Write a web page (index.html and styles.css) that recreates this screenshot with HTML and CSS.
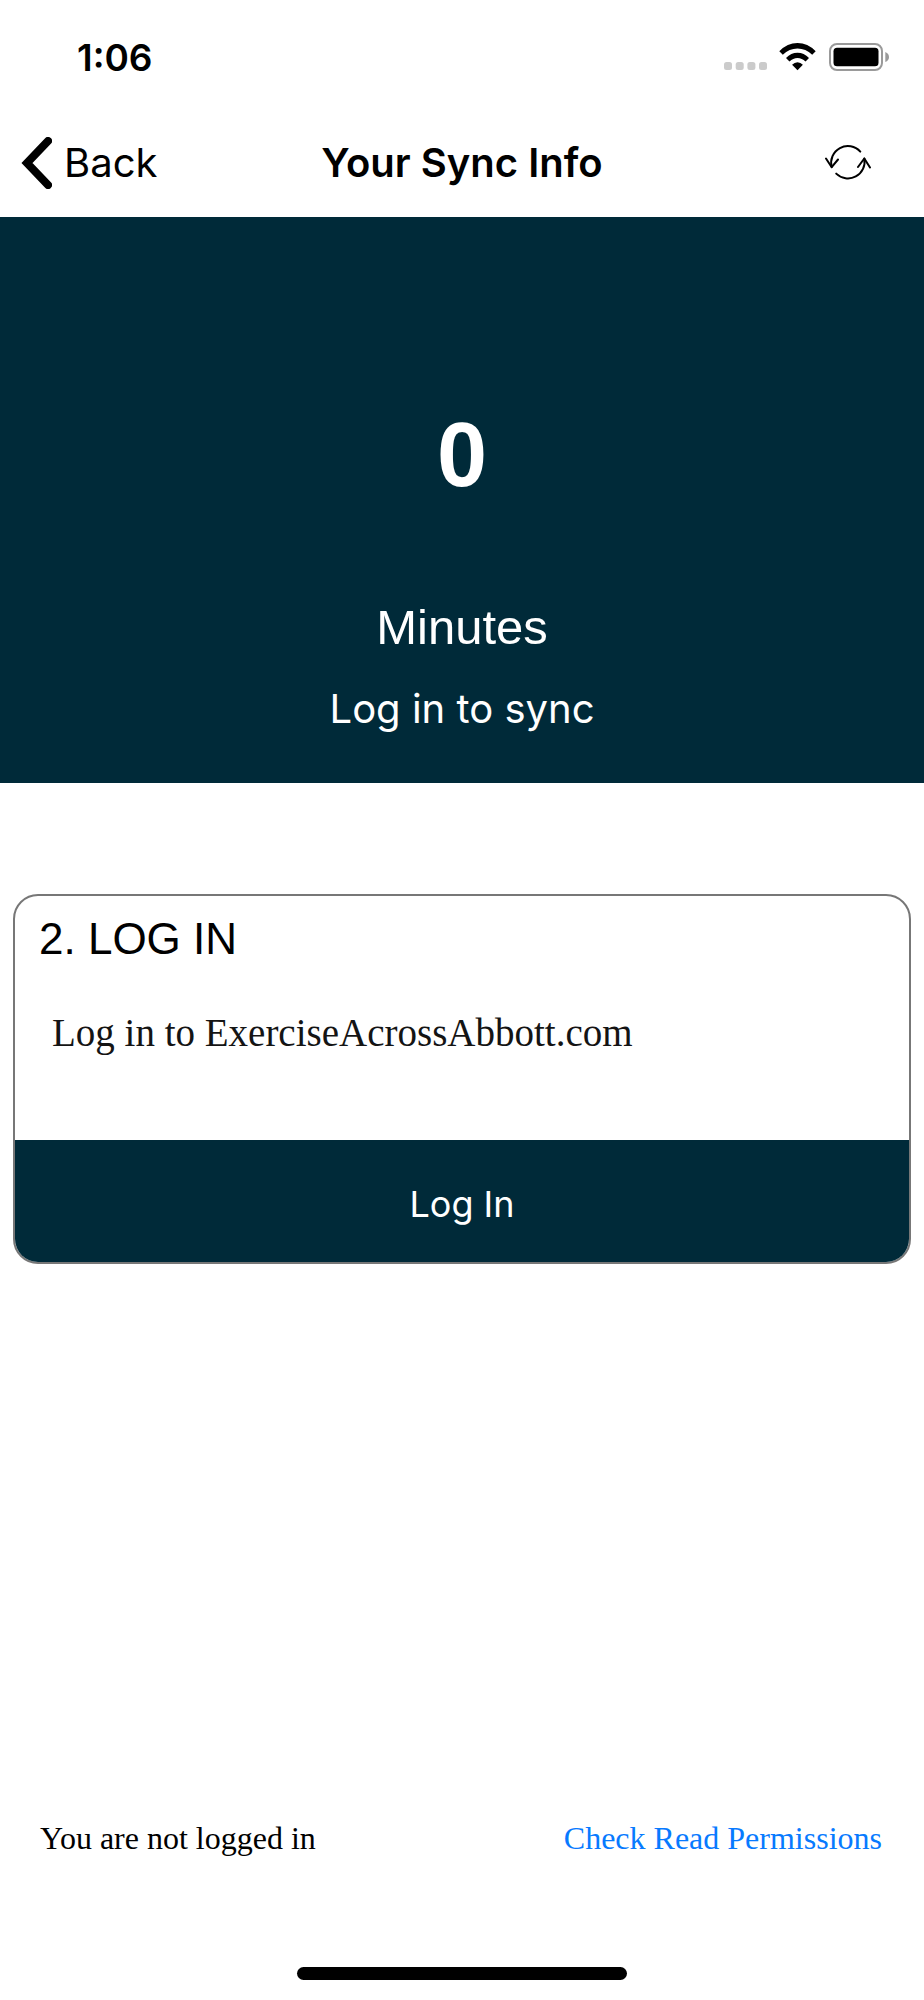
FILE: index.html
```html
<!DOCTYPE html>
<html lang="en">
<head>
    <meta charset="UTF-8">
    <meta name="viewport" content="width=device-width, initial-scale=1.0">
    <title>Your Sync Info</title>
    <link rel="stylesheet" href="styles.css">
</head>
<body>
    <div class="status-bar">
        <span class="time">1:06</span>
        <div class="status-icons">
            <svg class="signal" width="43" height="28" viewBox="0 0 43 28" fill="#cbcbcb">
                <rect x="0" y="19" width="8" height="8" rx="2.5"/>
                <rect x="11.7" y="19" width="8" height="8" rx="2.5"/>
                <rect x="23.4" y="19" width="8" height="8" rx="2.5"/>
                <rect x="35" y="19" width="8" height="8" rx="2.5"/>
            </svg>
            <svg class="wifi" width="38" height="28" viewBox="0 0 38 28">
                <path d="M0.3 8.2 Q8.3 0 18.5 0 Q28.7 0 36.7 8.2 L33.2 11.8 Q26.7 5.4 18.5 5.4 Q10.3 5.4 3.8 11.8 Z"/>
                <path d="M7 14.9 Q12 9.7 18.5 9.7 Q25 9.7 30 14.9 L26.5 18.5 Q23 15 18.5 15 Q14 15 10.5 18.5 Z"/>
                <path d="M13.1 21.7 Q15.4 19.2 18.5 19.2 Q21.6 19.2 23.9 21.7 L18.5 27.2 Z"/>
            </svg>
            <svg class="battery" width="62" height="28" viewBox="0 0 62 28">
                <rect x="1" y="1" width="52" height="26" rx="7" fill="none" stroke="#9a9a9a" stroke-width="2"/>
                <rect x="4.5" y="4.8" width="45" height="18.4" rx="3.5"/>
                <path d="M56.3 9 Q60 10.5 60 14 Q60 17.5 56.3 19 Z" fill="#9a9a9a"/>
            </svg>
        </div>
    </div>

    <header class="nav">
        <button class="back" type="button">
            <svg width="32" height="52" viewBox="0 0 32 52">
                <path d="M28 4 L7 26 L28 48" fill="none" stroke="#000" stroke-width="8" stroke-linecap="round" stroke-linejoin="miter"/>
            </svg>
            Back
        </button>
        <h1>Your Sync Info</h1>
        <button class="refresh" type="button" aria-label="Refresh">
            <svg width="46" height="38" viewBox="0 0 46 38" fill="none" stroke="#000" stroke-width="2" stroke-linecap="round" stroke-linejoin="round">
                <path d="M35.3 7.6 A16.7 16.7 0 0 0 6.7 23"/>
                <path d="M1 14.5 L6.7 23.2 L13 15.5"/>
                <path d="M11.2 29.6 A16.7 16.7 0 0 0 39.3 14.5"/>
                <path d="M33 23 L39.3 14.5 L45 23.5"/>
            </svg>
        </button>
    </header>

    <section class="summary">
        <p class="count">0</p>
        <p class="unit">Minutes</p>
        <p class="hint">Log in to sync</p>
    </section>

    <section class="card">
        <h2>2. LOG IN</h2>
        <p>Log in to ExerciseAcrossAbbott.com</p>
        <button class="login" type="button">Log In</button>
    </section>

    <footer class="footer">
        <span>You are not logged in</span>
        <a href="#">Check Read Permissions</a>
    </footer>
    <div class="home-bar"></div>
</body>
</html>
```

FILE: styles.css
```css
* {
    box-sizing: border-box;
}
body {
    display: flex;
    flex-direction: column;
    min-height: 100vh;
    margin: 0;
    background-color: #ffffff;
    color: #000000;
    font-family: Inter, "Liberation Sans", sans-serif;
}
h1, h2, p {
    margin: 0;
    font-weight: 400;
}
button {
    padding: 0;
    border: none;
    background: none;
    color: inherit;
    font-family: inherit;
    cursor: pointer;
}
svg {
    display: block;
}

/* Status bar */
.status-bar {
    display: flex;
    justify-content: space-between;
    align-items: center;
    height: 114px;
    padding: 0 33px 0 77px;
}
.time {
    font-size: 37px;
    font-weight: 600;
}
.status-icons {
    display: flex;
    gap: 12px;
}

/* Navigation */
.nav {
    display: grid;
    grid-template-columns: 1fr auto 1fr;
    align-items: center;
    height: 103px;
    padding: 0 20px 6px;
}
.back {
    display: flex;
    align-items: center;
    gap: 12px;
    justify-self: start;
    font-size: 40px;
}
.nav h1 {
    font-size: 40px;
    font-weight: 600;
}
.refresh {
    justify-self: end;
    margin-right: 33px;
}

/* Minutes summary */
.summary {
    padding: 184px 20px 50px;
    background-color: #002a39;
    color: #ffffff;
    text-align: center;
}
.count {
    font-family: "Liberation Sans", Arial, sans-serif;
    font-size: 90px;
    font-weight: 700;
    line-height: 108px;
}
.unit {
    margin-top: 88px;
    font-family: "Liberation Sans", Arial, sans-serif;
    font-size: 49px;
    line-height: 60px;
}
.hint {
    margin-top: 28px;
    font-size: 40px;
    line-height: 48px;
}

/* Login card */
.card {
    margin: 111px 13px 0;
    border: 2px solid #777777;
    border-radius: 25px;
    overflow: hidden;
}
.card h2 {
    padding: 16px 24px 0;
    font-family: "Liberation Sans", Arial, sans-serif;
    font-size: 44px;
    line-height: 54px;
}
.card p {
    padding: 42px 37px 82px;
    color: #141414;
    font-family: Georgia, "Liberation Serif", serif;
    font-size: 39px;
    line-height: 50px;
}
.login {
    display: block;
    width: 100%;
    height: 122px;
    padding-top: 6px;
    background-color: #002a39;
    color: #ffffff;
    font-size: 36px;
}

/* Footer */
.footer {
    display: flex;
    justify-content: space-between;
    margin-top: auto;
    padding: 0 42px 0 40px;
    font-family: Georgia, "Liberation Serif", serif;
    font-size: 32px;
    line-height: 40px;
}
.footer a {
    color: #077aff;
    text-decoration: none;
}
.home-bar {
    width: 330px;
    height: 13px;
    margin: 109px auto 20px;
    border-radius: 7px;
    background-color: #000000;
}
```
